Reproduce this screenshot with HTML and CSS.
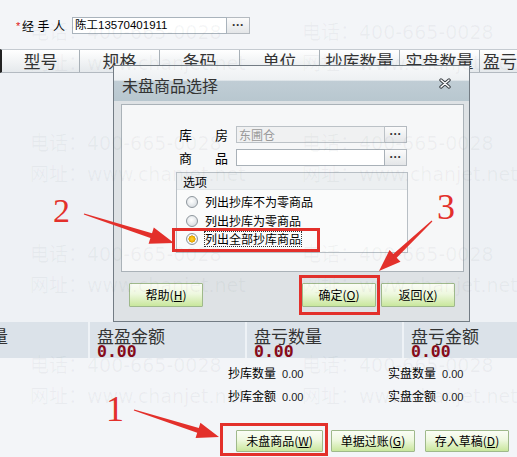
FILE: index.html
```html
<!DOCTYPE html>
<html lang="zh">
<head>
<meta charset="utf-8">
<title>未盘商品选择</title>
<link rel="stylesheet" href="styles.css">
</head>
<body>
<div class="page">
  <div class="topbar">
    <span class="req">*</span><span class="who">经手人</span>
    <div class="lookup"><span class="lookup-val">陈工13570401911</span><span class="dots">···</span></div>
  </div>

  <div class="grid-head">
    <div class="gh-cell first">型号</div>
    <div class="gh-cell">规格</div>
    <div class="gh-cell">条码</div>
    <div class="gh-cell">单位</div>
    <div class="gh-cell">抄库数量</div>
    <div class="gh-cell">实盘数量</div>
    <div class="gh-cell last">盈亏</div>
  </div>
  <div class="grid-body"></div>

  <div class="sum-band">
    <div class="sum-cell"><div class="sum-label">盘盈数量</div><div class="sum-value">0.00</div></div>
    <div class="sum-cell"><div class="sum-label">盘盈金额</div><div class="sum-value">0.00</div></div>
    <div class="sum-cell"><div class="sum-label">盘亏数量</div><div class="sum-value">0.00</div></div>
    <div class="sum-cell"><div class="sum-label">盘亏金额</div><div class="sum-value">0.00</div></div>
  </div>

  <div class="sum-lines">
    <div class="stat"><span class="lab">抄库数量</span><span class="num">0.00</span></div>
    <div class="stat"><span class="lab">实盘数量</span><span class="num">0.00</span></div>
    <div class="stat"><span class="lab">抄库金额</span><span class="num">0.00</span></div>
    <div class="stat"><span class="lab">实盘金额</span><span class="num">0.00</span></div>
  </div>

  <div class="actions">
    <button class="btn btn-w87">未盘商品(<u>W</u>)</button>
    <button class="btn btn-w84">单据过账(<u>G</u>)</button>
    <button class="btn btn-w84 gap10">存入草稿(<u>D</u>)</button>
  </div>

  <div class="dialog">
    <div class="dlg-title">
      <span>未盘商品选择</span>
      <svg class="close" width="12" height="11" viewBox="0 0 12 11"><path d="M2 2 L10 9 M10 2 L2 9" stroke="#3a3f44" stroke-width="3.4" stroke-linecap="round" fill="none"/><path d="M2 2 L10 9 M10 2 L2 9" stroke="#ffffff" stroke-width="1.4" stroke-linecap="round" fill="none"/></svg>
    </div>
    <div class="dlg-panel">
      <div class="field">
        <div class="field-label"><span>库</span><span>房</span></div>
        <span class="input disabled">东圃仓</span><span class="dots small">···</span>
      </div>
      <div class="field">
        <div class="field-label"><span>商</span><span>品</span></div>
        <span class="input"></span><span class="dots small">···</span>
      </div>
      <div class="group">
        <div class="group-title">选项</div>
        <div class="radios">
          <div class="radio-row"><span class="radio"></span><span>列出抄库不为零商品</span></div>
          <div class="radio-row"><span class="radio"></span><span>列出抄库为零商品</span></div>
          <div class="radio-row"><span class="radio on"></span><span class="focus">列出全部抄库商品</span></div>
        </div>
      </div>
    </div>
    <div class="dlg-actions">
      <button class="btn dbtn">帮助(<u>H</u>)</button>
      <span class="spacer"></span>
      <button class="btn dbtn">确定(<u>O</u>)</button>
      <button class="btn dbtn">返回(<u>X</u>)</button>
    </div>
  </div>

  <div class="mark-box box-a"></div>
  <div class="mark-box box-b"></div>
  <div class="mark-box box-c"></div>
  <svg class="arrows" width="517" height="457" viewBox="0 0 517 457">
    <polygon points="133.8,410.6 197.2,432.7 195.6,437.9 219,437 200.4,422.7 198.8,427.9 134.2,409.4"/>
    <polygon points="83.8,214.6 150.4,238.0 148.6,243.7 174,243 153.8,227.5 152.0,233.2 84.2,213.4"/>
    <polygon points="431.6,220.6 393.3,254.1 389.5,250.1 379,271 400.5,261.7 396.7,257.7 432.4,221.4"/>
  </svg>
  <span class="num-mark n1">1</span>
  <span class="num-mark n2">2</span>
  <span class="num-mark n3">3</span>

  <div class="wm">
    <div>电话：400-665-0028<br>网址：www.chanjet.net</div>
    <div>电话：400-665-0028<br>网址：www.chanjet.net</div>
    <div>电话：400-665-0028<br>网址：www.chanjet.net</div>
    <div>电话：400-665-0028<br>网址：www.chanjet.net</div>
    <div>电话：400-665-0028<br>网址：www.chanjet.net</div>
    <div>电话：400-665-0028<br>网址：www.chanjet.net</div>
    <div>电话：400-665-0028<br>网址：www.chanjet.net</div>
    <div>电话：400-665-0028<br>网址：www.chanjet.net</div>
  </div>
</div>
</body>
</html>
```
FILE: styles.css
```css
* { box-sizing: border-box; }
html, body { margin: 0; padding: 0; }
body {
  width: 517px; height: 457px; overflow: hidden;
  background: #f3f5f8;
  font-family: "Liberation Sans", "Noto Sans CJK SC", sans-serif;
  font-size: 12px; color: #000;
}
.page { position: relative; width: 517px; height: 457px; overflow: hidden; }

/* top field */
.topbar { height: 49px; display: flex; align-items: flex-start; padding: 17px 0 0 16px; }
.req { color: #e01010; width: 6px; line-height: 19px; font-size: 11px; }
.who { width: 50px; letter-spacing: 3.5px; line-height: 17px; font-family: "Noto Sans CJK SC", sans-serif; }
.lookup { display: flex; height: 17px; }
.lookup-val {
  width: 155px; height: 17px; border: 1px solid #a9b3bc; background: #fff;
  padding: 0 2px; line-height: 15px; font-size: 11.5px;
}
.dots {
  width: 23px; height: 17px; border: 1px solid #b4bac0; border-left: none;
  background: linear-gradient(#fbfbfb, #e4e6e8);
  text-align: center; line-height: 14px; font-size: 12px; font-weight: bold; color: #333;
}
.dots.small { width: 22px; }

/* grid */
.grid-head {
  display: flex; height: 24px;
  border-top: 1px solid #c5cbd1; border-bottom: 1px solid #b3bac1; border-left: 2px solid #222;
  background: linear-gradient(#ffffff, #e5e9ec);
}
.gh-cell {
  flex: 0 0 80px; border-right: 1px solid #a8b0b7; text-align: center;
  font-family: "Noto Sans CJK SC", sans-serif; font-size: 17px; line-height: 22px; color: #333;
  white-space: nowrap;
}
.gh-cell.first { flex-basis: 78px; }
.gh-cell.last { flex: 1 1 auto; text-align: left; padding-left: 3px; border-right: none; }
.grid-body { height: 249px; background: #eef1f5; }

/* summary band */
.sum-band { display: flex; height: 36px; margin-left: -67px; background: #dbe2e9; }
.sum-cell { flex: 0 0 157px; border-right: 2px solid #eef2f6; padding: 4px 0 0 7px; }
.sum-label { font-family: "Noto Sans CJK SC", sans-serif; font-size: 17px; line-height: 19px; color: #333; }
.sum-value { font-family: "DejaVu Sans Mono", monospace; font-weight: bold; font-size: 16.5px; line-height: 13px; color: #860b1a; }

.sum-lines {
  display: grid; grid-template-columns: 160px 110px; row-gap: 8px;
  padding: 8px 0 0 228px; height: 44px;
}
.stat { line-height: 14px; white-space: nowrap; }
.lab { font-family: "Noto Sans CJK SC", sans-serif; font-size: 12px; }
.num { font-size: 11px; margin-left: 6px; color: #222; }

/* buttons */
.actions { display: flex; justify-content: flex-end; padding: 28px 8px 0 0; gap: 8px; }
.btn {
  height: 22px; padding: 0; border: 1px solid #9fb98b; border-radius: 1px;
  background: linear-gradient(#fbfdf6 0%, #eef8df 45%, #c9e79c 100%);
  font-family: "Noto Sans CJK SC", sans-serif; font-size: 12px; line-height: 20px; color: #000;
  text-align: center; white-space: nowrap;
}
.btn u { text-decoration: underline; }
.btn-w87 { width: 87px; }
.btn-w84 { width: 84px; }
.gap10 { margin-left: 2px; }

/* dialog */
.dialog {
  position: absolute; left: 113px; top: 65px; width: 357px; height: 257px;
  border: 1px solid #737c84; background: #dee2e5;
  display: flex; flex-direction: column;
}
.dlg-title {
  height: 35px; display: flex; align-items: center; justify-content: space-between;
  padding: 3px 18px 0 8px;
  background: linear-gradient(#f6f8f9 0%, #eef1f3 40%, #c0cdd5 44%, #b8c7cf 100%);
  font-family: "Noto Sans CJK SC", sans-serif; font-size: 16px; color: #333;
}
.close { display: block; margin-top: -3px; }
.dlg-panel {
  margin: 3px 5px 0 7px; height: 168px;
  border: 1px solid #aab2b8; background: #f6f7f8;
  padding: 21px 0 0 54px;
}
.field { display: flex; height: 17px; margin: 0 0 6px 3px; }
.field-label {
  width: 49px; margin-right: 8px; display: flex; justify-content: space-between;
  font-family: "Noto Sans CJK SC", sans-serif; font-size: 13px; line-height: 17px;
}
.input { width: 149px; height: 17px; border: 1px solid #a9b1b8; background: #fff; padding: 0 2px; line-height: 15px; }
.input.disabled { background: #f0f1f2; color: #9a9a9a; border-color: #bcc2c7; font-family: "Noto Sans CJK SC", sans-serif; }
.group { width: 232px; height: 81px; margin-top: 1px; border: 1px solid #b8bfc5; background: #fafbfb; }
.group-title {
  height: 17px; padding-left: 6px; background: #eceff1; border-bottom: 1px solid #e1e5e8;
  font-family: "Noto Sans CJK SC", sans-serif; font-size: 12px; line-height: 17px;
}
.radios { padding-top: 3px; }
.radio-row {
  display: flex; align-items: center; gap: 7px; height: 18.5px; padding-left: 9px;
  font-family: "Noto Sans CJK SC", sans-serif; font-size: 12px; line-height: 14px;
}
.radio {
  width: 12px; height: 12px; border-radius: 50%; border: 1px solid #8e969d;
  background: radial-gradient(circle at 45% 40%, #ffffff 0, #eceff1 40%, #cdd3d8 100%);
}
.radio.on {
  background: radial-gradient(circle at 50% 50%, #ffd43a 0, #f2b300 2.6px, #c98c00 3.3px, #fdfdfd 3.8px, #d8dde1 6px);
}
.focus { outline: 1px dotted #333; outline-offset: 0; }
.dlg-actions { display: flex; padding: 11px 14px 0 15px; gap: 5px; }
.spacer { flex: 1; }
.dbtn { width: 74px; height: 24px; line-height: 22px; }

/* annotations */
.mark-box { position: absolute; border: 3px solid #e3302b; }
.box-a { left: 172px; top: 228px; width: 148px; height: 24px; }
.box-b { left: 299px; top: 275px; width: 81px; height: 40px; }
.box-c { left: 220px; top: 423px; width: 108px; height: 33px; }
.arrows { position: absolute; left: 0; top: 0; fill: #e3302b; }
.num-mark {
  position: absolute; font-family: "Liberation Serif", serif; color: #e3302b;
  font-size: 36px; line-height: 1;
}
.n1 { left: 106px; top: 391px; }
.n2 { left: 53px; top: 194px; font-size: 34px; }
.n3 { left: 437px; top: 189px; }

/* watermark */
.wm {
  position: absolute; left: 0; top: 0; width: 600px; height: 457px; pointer-events: none;
  display: grid; grid-template-columns: 272px 272px; grid-auto-rows: 111px;
  padding: 17px 0 0 30px;
  font-family: "DejaVu Sans", "Noto Sans CJK SC", sans-serif; font-size: 19px; line-height: 31px;
  color: rgba(90, 100, 112, 0.06); white-space: nowrap;
}
```
